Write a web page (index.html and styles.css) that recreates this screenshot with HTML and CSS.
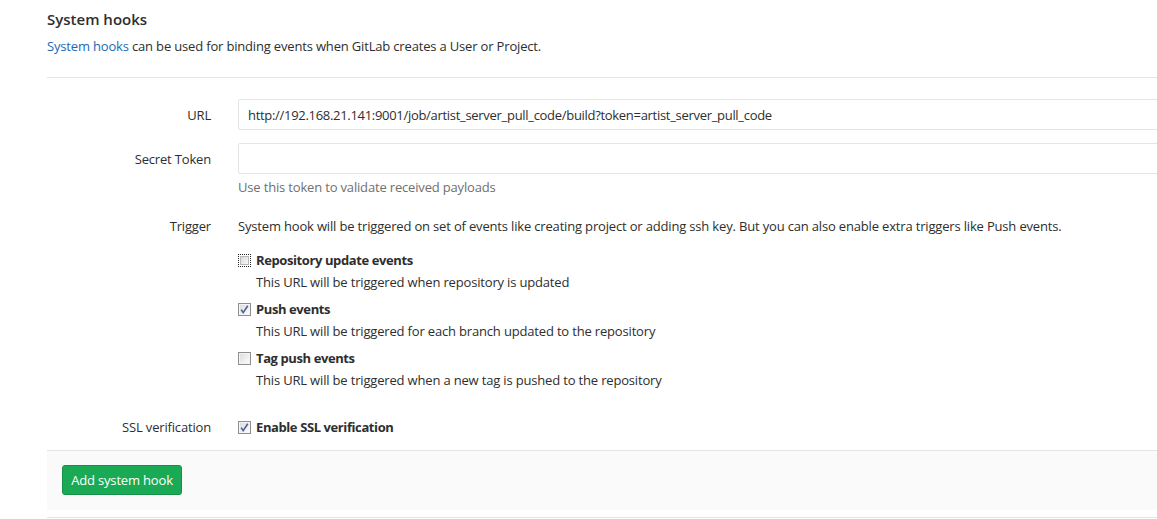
FILE: index.html
```html
<!DOCTYPE html>
<html>
<head>
<meta charset="utf-8">
<link rel="stylesheet" href="styles.css">
</head>
<body>
<div class="page">
  <h4 class="title">System hooks</h4>
  <p class="lead"><a href="#" class="link">System hooks</a> can be used for binding events when GitLab creates a User or Project.</p>
  <div class="sep"></div>
  <form class="hook-form">
    <div class="row row-url">
      <div class="lbl">URL</div>
      <div class="ctl"><input class="field" type="text" value="http://192.168.21.141:9001/job/artist_server_pull_code/build?token=artist_server_pull_code"></div>
    </div>
    <div class="row row-token">
      <div class="lbl">Secret Token</div>
      <div class="ctl">
        <div class="field field-empty"></div>
        <p class="help">Use this token to validate received payloads</p>
      </div>
    </div>
    <div class="row row-trigger">
      <div class="lbl lbl-plain">Trigger</div>
      <div class="ctl">
        <p class="trig-desc">System hook will be triggered on set of events like creating project or adding ssh key. But you can also enable extra triggers like Push events.</p>
        <div class="opt">
          <div class="opt-head">
            <svg class="cb" width="13" height="13" viewBox="0 0 13 13"><defs><linearGradient id="g1" x1="0" y1="0" x2="1" y2="1"><stop offset="0" stop-color="#d6d6d6"/><stop offset="1" stop-color="#fdfdfd"/></linearGradient></defs><rect x="0" y="0" width="13" height="13" fill="#fff"/><path d="M0 0.5H13M0 12.5H13M0.5 0V13M12.5 0V13" stroke="#222" stroke-dasharray="1 1"/><rect x="2.5" y="2.5" width="8" height="8" fill="url(#g1)" stroke="#b8b8b8"/></svg>
            <span class="opt-title">Repository update events</span>
          </div>
          <p class="opt-help">This URL will be triggered when repository is updated</p>
        </div>
        <div class="opt">
          <div class="opt-head">
            <svg class="cb" width="13" height="13" viewBox="0 0 13 13"><defs><linearGradient id="g2" x1="0" y1="0" x2="1" y2="1"><stop offset="0" stop-color="#dcdcdc"/><stop offset="1" stop-color="#fdfdfd"/></linearGradient></defs><rect x="0.5" y="0.5" width="12" height="12" fill="#fff" stroke="#8e8f8f"/><rect x="1.5" y="1.5" width="10" height="10" fill="url(#g2)" stroke="#f4f4f4"/><path d="M3.2 6.6 L5.2 9.6 L9.8 2.8" fill="none" stroke="#4a5f97" stroke-width="1.6"/></svg>
            <span class="opt-title">Push events</span>
          </div>
          <p class="opt-help">This URL will be triggered for each branch updated to the repository</p>
        </div>
        <div class="opt">
          <div class="opt-head">
            <svg class="cb" width="13" height="13" viewBox="0 0 13 13"><defs><linearGradient id="g3" x1="0" y1="0" x2="1" y2="1"><stop offset="0" stop-color="#dcdcdc"/><stop offset="1" stop-color="#fdfdfd"/></linearGradient></defs><rect x="0.5" y="0.5" width="12" height="12" fill="#fff" stroke="#8e8f8f"/><rect x="1.5" y="1.5" width="10" height="10" fill="url(#g3)" stroke="#f4f4f4"/></svg>
            <span class="opt-title">Tag push events</span>
          </div>
          <p class="opt-help">This URL will be triggered when a new tag is pushed to the repository</p>
        </div>
      </div>
    </div>
    <div class="row row-ssl">
      <div class="lbl lbl-plain">SSL verification</div>
      <div class="ctl">
        <div class="opt-head">
          <svg class="cb" width="13" height="13" viewBox="0 0 13 13"><defs><linearGradient id="g4" x1="0" y1="0" x2="1" y2="1"><stop offset="0" stop-color="#dcdcdc"/><stop offset="1" stop-color="#fdfdfd"/></linearGradient></defs><rect x="0.5" y="0.5" width="12" height="12" fill="#fff" stroke="#8e8f8f"/><rect x="1.5" y="1.5" width="10" height="10" fill="url(#g4)" stroke="#f4f4f4"/><path d="M3.2 6.6 L5.2 9.6 L9.8 2.8" fill="none" stroke="#4a5f97" stroke-width="1.6"/></svg>
          <span class="opt-title">Enable SSL verification</span>
        </div>
      </div>
    </div>
    <div class="actions">
      <button type="button" class="btn-create">Add system hook</button>
    </div>
  </form>
  <div class="sep sep-bottom"></div>
</div>
</body>
</html>
```
FILE: styles.css
```css
html, body {
  margin: 0;
  padding: 0;
  background: #fff;
  overflow: hidden;
}
body {
  font-family: "Open Sans", "Noto Sans", sans-serif;
  font-size: 13px;
  letter-spacing: -0.17px;
  color: #2e2e2e;
}
.page {
  width: 1200px;
  padding-left: 47px;
  padding-top: 8px;
}
.title {
  margin: 0;
  font-size: 15px;
  font-weight: 600;
  line-height: 22px;
  letter-spacing: 0;
  color: #2e2e2e;
}
.lead {
  margin: 6px 0 0;
  line-height: 20px;
}
.link {
  color: #1b69b6;
  text-decoration: none;
}
.sep {
  height: 0;
  border-top: 1px solid #e5e5e5;
  margin-top: 21px;
}
.hook-form {
  margin-top: 21px;
}
.row {
  display: grid;
  grid-template-columns: 164px minmax(0, 1fr);
  column-gap: 27px;
  margin-bottom: 12px;
}
.lbl {
  text-align: right;
  line-height: 32px;
}
.lbl-plain {
  line-height: 18px;
}
.ctl {
  min-width: 0;
}
.field {
  display: block;
  box-sizing: border-box;
  width: 100%;
  height: 31px;
  margin: 0;
  border: 1px solid #e5e5e5;
  border-radius: 2px;
  padding: 0 9px;
  font: inherit;
  letter-spacing: -0.3px;
  color: #2e2e2e;
  background: #fff;
  outline: none;
}
.help {
  margin: 4px 0 0;
  color: #707070;
  line-height: 18px;
}
.row-token {
  margin-bottom: 21px;
}
.trig-desc {
  margin: 0 0 15px;
  line-height: 18px;
}
.opt {
  margin-bottom: 7px;
}
.opt-head {
  display: flex;
  align-items: center;
  gap: 5px;
  line-height: 20px;
}
.cb {
  display: block;
  flex: none;
}
.opt-title {
  font-weight: 700;
  letter-spacing: -0.4px;
}
.opt-help {
  margin: 2px 0 0 18px;
  line-height: 20px;
}
.row-trigger {
  margin-bottom: 20px;
}
.row-ssl .lbl-plain {
  line-height: 20px;
}
.row-ssl {
  margin-bottom: 13px;
}
.actions {
  background: #fafafa;
  border-top: 1px solid #e5e5e5;
  padding: 14px 15px;
  height: 31px;
}
.btn-create {
  display: block;
  height: 30px;
  width: 120px;
  box-sizing: border-box;
  background: #1aaa55;
  border: 1px solid #168f48;
  border-radius: 3px;
  color: #fff;
  font: inherit;
  letter-spacing: inherit;
  padding: 0;
}
.sep-bottom {
  margin-top: 7px;
}
```
